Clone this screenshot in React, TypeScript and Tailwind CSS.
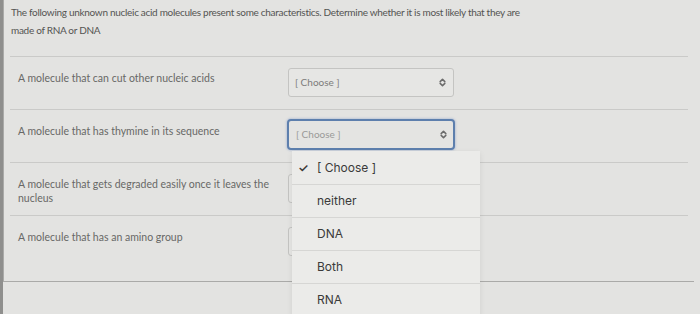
import React from 'react';

const rows = [
  { label: 'A molecule that can cut other nucleic acids', h: 'h-[53px]', focused: false, hidden: false },
  { label: 'A molecule that has thymine in its sequence', h: 'h-[53px]', focused: true, hidden: false },
  { label: 'A molecule that gets degraded easily once it leaves the nucleus', h: 'h-[53px]', focused: false, hidden: true },
  { label: 'A molecule that has an amino group', h: 'h-[66px]', focused: false, hidden: true },
];

const options = ['[ Choose ]', 'neither', 'DNA', 'Both', 'RNA'];

function Chevrons() {
  return (
    <svg width="7" height="9" viewBox="0 0 7 9" fill="none" stroke="#6b6b6b" strokeWidth="1.6" strokeLinecap="round" strokeLinejoin="round">
      <path d="M1.2 3.6 L3.5 1.3 L5.8 3.6" />
      <path d="M1.2 5.4 L3.5 7.7 L5.8 5.4" />
    </svg>
  );
}

// rows 3 and 4 sit under the open list, so only their box edge shows
function Select({ focused, hidden }: { focused: boolean; hidden: boolean }) {
  if (hidden) {
    return <div className="h-[29px] w-[166px] rounded-[3px] border border-[#c4c4c2] bg-[#e6e6e4]" />;
  }
  return (
    <div
      className={
        focused
          ? 'flex h-[31px] w-[168px] items-center justify-between rounded-[4px] border-2 border-[#5d7fad] bg-[#e4e4e2] pl-[7px] pr-[6px] shadow-[0_0_2px_1px_rgba(120,150,200,0.35)]'
          : 'flex h-[29px] w-[166px] items-center justify-between rounded-[3px] border border-[#c4c4c2] bg-[#e6e6e4] pl-[6px] pr-[7px]'
      }
    >
      <span className={focused ? 'text-[10px] text-[#9a9a98]' : 'text-[10px] text-[#7c7c7a]'}>[ Choose ]</span>
      <Chevrons />
    </div>
  );
}

export default function App() {
  return (
    <div className="relative flex h-[314px] w-[700px] overflow-hidden bg-[#e3e3e1] font-['Lato',sans-serif]">
      <div className="h-full w-[3px] bg-[#8f8f8d]" />
      <div className="flex h-[282px] w-[691px] flex-col border-b border-l border-[#aaaaa8]">
        <div className="px-[7px] pt-[3px] text-[10px] leading-[18px] tracking-[-0.3px] text-[#545452]">
          The following unknown nucleic acid molecules present some characteristics. Determine whether it is most likely that they are
          <br />
          made of RNA or DNA
        </div>
        <div className="mx-[6px] mt-[17px] flex flex-col">
          {rows.map((r) => (
            <div key={r.label} className={`flex items-start border-t border-[#cacac8] ${r.h}`}>
              <div className="ml-[8px] mt-[14px] w-[258px] text-[10.5px] leading-[14px] text-[#686866]">{r.label}</div>
              <div className={r.focused ? 'ml-[11px] mt-[9px]' : 'ml-[12px] mt-[11px]'}>
                <Select focused={r.focused} hidden={r.hidden} />
              </div>
            </div>
          ))}
        </div>
      </div>

      <div className="absolute left-[292px] top-[151px] w-[188px] bg-[#ebebe9] font-['Inter',sans-serif] shadow-[0_2px_6px_rgba(0,0,0,0.08)]">
        {options.map((o, i) => (
          <div
            key={o}
            className={`flex h-[33px] items-center text-[12px] text-[#3a3a3a] ${i > 0 ? 'border-t border-[#d6d6d4]' : ''}`}
          >
            <span className="w-[25px] pl-[6px] text-[12px] font-semibold text-[#3a3a3a]">{i === 0 ? '✓' : ''}</span>
            <span>{o}</span>
          </div>
        ))}
      </div>
    </div>
  );
}
